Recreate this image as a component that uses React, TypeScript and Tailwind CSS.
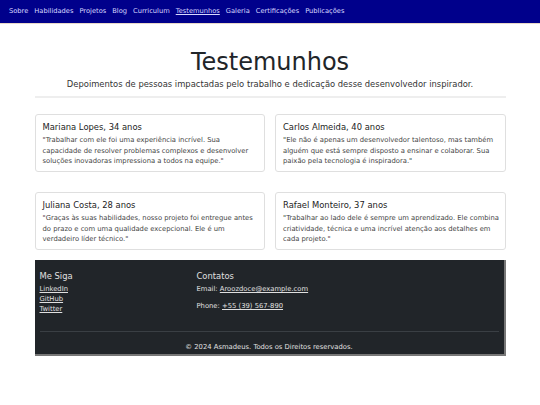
import React from "react";

const links = ["Sobre", "Habilidades", "Projetos", "Blog", "Curriculum", "Testemunhos", "Galeria", "Certificações", "Publicações"];

const testimonials = [
  {
    name: "Mariana Lopes, 34 anos",
    lines: [
      "\"Trabalhar com ele foi uma experiência incrível. Sua",
      "capacidade de resolver problemas complexos e desenvolver",
      "soluções inovadoras impressiona a todos na equipe.\"",
    ],
  },
  {
    name: "Carlos Almeida, 40 anos",
    lines: [
      "\"Ele não é apenas um desenvolvedor talentoso, mas também",
      "alguém que está sempre disposto a ensinar e colaborar. Sua",
      "paixão pela tecnologia é inspiradora.\"",
    ],
  },
  {
    name: "Juliana Costa, 28 anos",
    lines: [
      "\"Graças às suas habilidades, nosso projeto foi entregue antes",
      "do prazo e com uma qualidade excepcional. Ele é um",
      "verdadeiro líder técnico.\"",
    ],
  },
  {
    name: "Rafael Monteiro, 37 anos",
    lines: [
      "\"Trabalhar ao lado dele é sempre um aprendizado. Ele combina",
      "criatividade, técnica e uma incrível atenção aos detalhes em",
      "cada projeto.\"",
    ],
  },
];

export default function App() {
  return (
    <div className="min-h-[405px] bg-white text-[#212529]" style={{ fontFamily: '"DejaVu Sans", Verdana, sans-serif' }}>
      <nav className="h-[24px] bg-[#00008b] border-b border-[#e8d8c8] flex items-center px-[9px] gap-[6px] text-[6.7px] text-[#d8d8ff]">
        {links.map((l) => (
          <a key={l} className={l === "Testemunhos" ? "underline" : ""}>{l}</a>
        ))}
      </nav>
      <main className="w-[471px] mx-auto">
        <header className="text-center pt-[23px]">
          <h1 className="text-[24px] leading-[30px] text-[#212529]">Testemunhos</h1>
          <p className="text-[8.4px] leading-[12px] mt-[1px] text-[#333]">Depoimentos de pessoas impactadas pelo trabalho e dedicação desse desenvolvedor inspirador.</p>
          <div className="h-[2px] bg-[#eeeeee] mt-[6px]" />
        </header>
        <section className="grid grid-cols-2 gap-x-[10px] gap-y-[20px] mt-[16px]">
          {testimonials.map((t) => (
            <div key={t.name} className="border border-[#dfdfdf] rounded-[3px] pl-[7px] pr-[2px] pt-[6px] h-[58px]">
              <h3 className="text-[8.4px] leading-[12px] text-[#222]">{t.name}</h3>
              <p className="text-[6.8px] leading-[10.5px] text-[#444] mt-[2px] whitespace-nowrap">
                {t.lines.map((line) => (
                  <span key={line} className="block">{line}</span>
                ))}
              </p>
            </div>
          ))}
        </section>
        <footer className="mt-[10px] bg-[#212529] text-[#e0e0e0] border-r-2 border-b-2 border-[#777] px-[5px] pt-[10px]">
          <div className="flex">
            <div className="w-[157px]">
              <h4 className="text-[8.4px] leading-[12px] mb-[2px]">Me Siga</h4>
              <ul className="text-[6.8px] leading-[10px]">
                <li><a className="underline">LinkedIn</a></li>
                <li><a className="underline">GitHub</a></li>
                <li><a className="underline">Twitter</a></li>
              </ul>
            </div>
            <div>
              <h4 className="text-[8.4px] leading-[12px] mb-[2px]">Contatos</h4>
              <p className="text-[6.8px] leading-[10px]">Email: <a className="underline">Aroozdoce@example.com</a></p>
              <p className="text-[6.8px] leading-[10px] mt-[7px]">Phone: <a className="underline">+55 (39) 567-890</a></p>
            </div>
          </div>
          <div className="h-px bg-[#3a3f44] mt-[17px]" />
          <p className="text-center text-[6.8px] leading-[10px] pt-[10px] pb-[2px]">© 2024 Asmadeus. Todos os Direitos reservados.</p>
        </footer>
      </main>
    </div>
  );
}
